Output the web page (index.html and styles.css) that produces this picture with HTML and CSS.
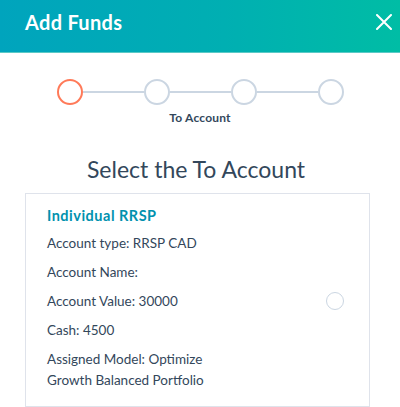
FILE: index.html
```html
<!DOCTYPE html>
<html>
<head>
<meta charset="utf-8">
<link rel="stylesheet" href="styles.css">
</head>
<body>
<div class="modal">
  <header class="header">
    <h1 class="title">Add Funds</h1>
    <button class="close" aria-label="Close">
      <svg width="16" height="16" viewBox="0 0 16 16"><path d="M1 1 L15 15 M15 1 L1 15" stroke="#fff" stroke-width="2" stroke-linecap="round"/></svg>
    </button>
  </header>
  <div class="stepper">
    <div class="steps">
      <span class="dot active"></span>
      <span class="line"></span>
      <span class="dot"></span>
      <span class="line"></span>
      <span class="dot"></span>
      <span class="line"></span>
      <span class="dot"></span>
    </div>
    <div class="label">To Account</div>
  </div>
  <h2 class="heading">Select the To Account</h2>
  <div class="card">
    <div class="info">
      <div class="name">Individual RRSP</div>
      <p class="row">Account type: RRSP CAD</p>
      <p class="row">Account Name:</p>
      <p class="row">Account Value: 30000</p>
      <p class="row">Cash: 4500</p>
      <p class="row">Assigned Model: Optimize Growth Balanced Portfolio</p>
    </div>
    <span class="radio"></span>
  </div>
</div>
</body>
</html>
```

FILE: styles.css
```css
* { box-sizing: border-box; }
html, body { margin: 0; padding: 0; background: #fff; }
body {
  font-family: "Lato", "Noto Sans", sans-serif;
  color: #33475b;
  width: 400px;
  height: 407px;
  overflow: hidden;
}
.header {
  height: 53px;
  background: linear-gradient(to right, #00a4bd, #00afb2 56%, #00bda5);
  border-bottom: 1px solid #5cc9c6;
  display: flex;
  align-items: center;
  justify-content: space-between;
  padding: 0 8px 8px 25px;
}
.title {
  margin: 0;
  color: #fff;
  font-size: 20px;
  letter-spacing: 0.3px;
  font-weight: 700;
}
.close {
  background: none;
  border: 0;
  padding: 0;
  display: flex;
}
.stepper {
  margin-top: 26px;
  height: 52px;
  display: flex;
  flex-direction: column;
  align-items: center;
}
.steps {
  display: flex;
  align-items: center;
}
.dot {
  width: 26px;
  height: 26px;
  border-radius: 50%;
  border: 2px solid #cbd6e2;
  background: #fff;
}
.dot.active { border-color: #ff7a59; }
.line {
  width: 61px;
  height: 2px;
  background: #cbd6e2;
}
.label {
  margin-top: 5px;
  font-size: 12px;
  letter-spacing: 0.2px;
  font-weight: 700;
  white-space: nowrap;
}
.heading {
  margin: 0;
  text-align: center;
  font-size: 23px;
  line-height: 28px;
  font-weight: 400;
  height: 62px;
  padding: 24px 8px 0 0;
}
.card {
  margin-left: 25px;
  width: 345px;
  height: 214px;
  border: 1px solid #dfe3eb;
  display: flex;
  align-items: center;
  padding: 16px 25px 10px 21px;
}
.info { flex: 1; }
.name {
  color: #0091ae;
  font-weight: 700;
  font-size: 14.5px;
  letter-spacing: 0.5px;
  margin-bottom: 9px;
}
.row {
  margin: 0 0 8px;
  font-size: 13.5px;
  line-height: 21px;
  width: 190px;
}
.radio {
  width: 18px;
  height: 18px;
  border-radius: 50%;
  border: 1px solid #cbd6e2;
  margin-top: -4px;
}
```
